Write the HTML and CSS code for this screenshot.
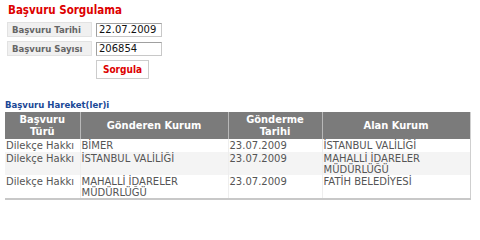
FILE: index.html
```html
<!DOCTYPE html>
<html lang="tr">
<head>
<meta charset="utf-8">
<title>Başvuru Sorgulama</title>
<link rel="stylesheet" href="styles.css">
</head>
<body>
<div class="page">
  <h1 class="title">Başvuru Sorgulama</h1>
  <div class="form">
    <div class="form-row">
      <div class="label">Başvuru Tarihi</div>
      <div class="input">22.07.2009</div>
    </div>
    <div class="form-row">
      <div class="label">Başvuru Sayısı</div>
      <div class="input">206854</div>
    </div>
    <div class="form-row">
      <div class="label-spacer"></div>
      <div class="button">Sorgula</div>
    </div>
  </div>
  <h2 class="section">Başvuru Hareket(ler)i</h2>
  <table class="grid">
    <colgroup>
      <col class="c1"><col class="c2"><col class="c3"><col class="c4">
    </colgroup>
    <thead>
      <tr>
        <th>Başvuru<br>Türü</th>
        <th>Gönderen Kurum</th>
        <th>Gönderme<br>Tarihi</th>
        <th>Alan Kurum</th>
      </tr>
    </thead>
    <tbody>
      <tr>
        <td>Dilekçe Hakkı</td>
        <td>BİMER</td>
        <td>23.07.2009</td>
        <td>İSTANBUL VALİLİĞİ</td>
      </tr>
      <tr class="alt">
        <td>Dilekçe Hakkı</td>
        <td>İSTANBUL VALİLİĞİ</td>
        <td>23.07.2009</td>
        <td>MAHALLİ İDARELER<br>MÜDÜRLÜĞÜ</td>
      </tr>
      <tr>
        <td>Dilekçe Hakkı</td>
        <td>MAHALLİ İDARELER<br>MÜDÜRLÜĞÜ</td>
        <td>23.07.2009</td>
        <td>FATİH BELEDİYESİ</td>
      </tr>
    </tbody>
  </table>
</div>
</body>
</html>
```
FILE: styles.css
```css
html, body {
  margin: 0;
  padding: 0;
  background: #ffffff;
}
body {
  font-family: "DejaVu Sans", Verdana, sans-serif;
  font-size: 10px;
  color: #555555;
}
.page {
  padding: 3px 0 0 0;
}
.title,
.label,
.button,
.section,
.grid th {
  font-family: "DejaVu Sans Condensed", "DejaVu Sans", sans-serif;
  font-stretch: condensed;
  font-weight: bold;
}
.title {
  margin: 0 0 0 8px;
  font-size: 11.5px;
  line-height: 15px;
  color: #dd0000;
}
.form {
  margin: 4px 0 0 7px;
  display: flex;
  flex-direction: column;
  gap: 4px;
}
.form-row {
  display: flex;
  align-items: center;
  gap: 4px;
}
.label {
  box-sizing: border-box;
  width: 85px;
  height: 15px;
  padding: 0 0 0 4px;
  background: #f0f0f0;
  border: 1px solid #e2e2e2;
  font-size: 9.5px;
  line-height: 13px;
  white-space: nowrap;
  color: #666666;
}
.label-spacer {
  width: 85px;
}
.input {
  box-sizing: border-box;
  width: 66px;
  height: 14px;
  padding: 0 0 0 2px;
  border: 1px solid #a0a0a0;
  border-right-color: #c8c8c8;
  border-bottom-color: #c8c8c8;
  font-size: 10px;
  line-height: 12px;
  color: #111111;
}
.button {
  box-sizing: border-box;
  width: 53px;
  height: 19px;
  border: 1px solid #cccccc;
  background: #ffffff;
  color: #dd0000;
  font-size: 10px;
  line-height: 17px;
  text-align: center;
}
.section {
  margin: 20px 0 0 5px;
  font-size: 9.5px;
  line-height: 12px;
  color: #1a4896;
}
.grid {
  margin: 1px 0 0 5px;
  width: 465px;
  border-collapse: collapse;
  table-layout: fixed;
  border-right: 1px solid #cfcfcf;
  border-bottom: 2px solid #c8c8c8;
}
.c1 { width: 75px; }
.c2 { width: 148px; }
.c3 { width: 94px; }
.c4 { width: 148px; }
.grid th {
  background: #7b7b7b;
  color: #ffffff;
  font-size: 11px;
  line-height: 12px;
  padding: 1px 2px 1px 2px;
  height: 25px;
  border-left: 1px solid #b8b8b8;
  text-align: center;
  vertical-align: middle;
}
.grid th:first-child {
  border-left: none;
}
.grid td {
  font-size: 10px;
  line-height: 11px;
  color: #555555;
  padding: 1px 1px 0 1px;
  vertical-align: top;
  border-left: 1px solid #eeeeee;
  white-space: nowrap;
}
.grid td:first-child {
  border-left: none;
}
.grid tbody tr:first-child td {
  height: 12px;
}
.grid tbody tr + tr td {
  height: 21px;
}
.grid tr.alt td {
  background: #f4f4f4;
}
```
